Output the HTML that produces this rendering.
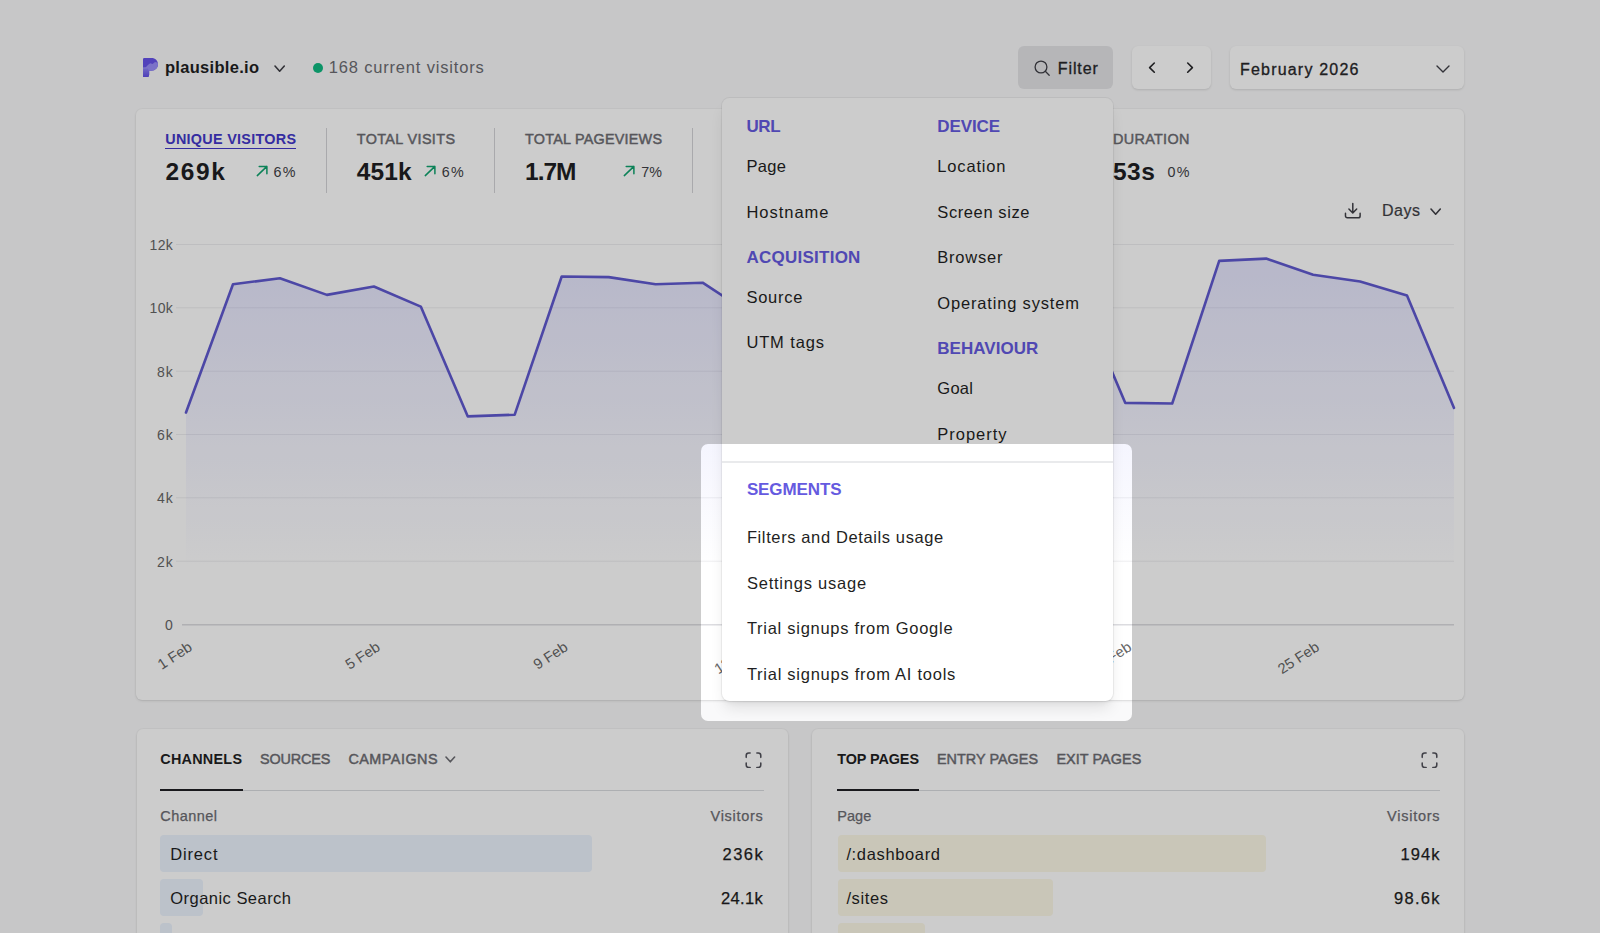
<!DOCTYPE html>
<html lang="en"><head><meta charset="utf-8"><title>Plausible – Segments</title>
<style>
html,body{margin:0;padding:0}
body{width:1600px;height:933px;overflow:hidden;position:relative;background:#f9f9fa;font-family:"Liberation Sans", Arial, sans-serif;}
.abs{position:absolute}
.t{position:absolute;white-space:nowrap;line-height:24px;height:24px}
.card{position:absolute;background:#fff;border-radius:6px;box-shadow:0 0 0 1px rgba(0,0,0,0.02),0 1px 3px rgba(0,0,0,0.09),0 1px 2px -1px rgba(0,0,0,0.09)}
.btn{position:absolute;background:#fff;border-radius:6px;box-shadow:0 1px 3px rgba(0,0,0,0.08),0 1px 2px rgba(0,0,0,0.05)}
.div{position:absolute;width:1px;background:#d4d4d8;top:128px;height:64.5px}
.bar{position:absolute;height:37.2px;border-radius:4px}
#dim{position:absolute;left:700.5px;top:444px;width:431.5px;height:277px;border-radius:7px;box-shadow:0 0 0 3000px rgba(0,0,0,0.2);pointer-events:none}
#dd{position:absolute;left:721.5px;top:98px;width:391px;height:603px;background:#fff;border-radius:7.5px;box-shadow:0 0 0 1px rgba(0,0,0,0.05),0 10px 15px -3px rgba(0,0,0,0.10),0 4px 6px -4px rgba(0,0,0,0.10)}
</style></head>
<body>
<header aria-label="Site header">
<svg class="abs" style="left:142.6px;top:57.5px" width="15" height="19.5" viewBox="0 0 15 19.5"><defs><clipPath id="pc"><path d="M0 1.2 Q0 0 1.2 0 H8.5 C12.3 0 15 2.7 15 6.3 C15 10 12.2 12.7 8.5 12.7 H6.2 V16.5 Q6.2 19.5 3.2 19.5 H0 Z"/></clipPath><linearGradient id="stem" x1="0" y1="0" x2="0" y2="1"><stop offset="0" stop-color="#9388f8"/><stop offset="1" stop-color="#5f4ce6"/></linearGradient></defs><g clip-path="url(#pc)"><rect width="15" height="19.5" fill="#6753ea"/><rect x="0" y="9.4" width="6.4" height="10.2" fill="url(#stem)"/><path d="M0 9.7 L2.8 9.3 L5.2 6.7 L7.2 5.3 L9.6 5.9 L12 3.9 L15 4.8 V13 H6 L4.8 10.6 L0 10.8 Z" fill="#9a8ffa"/></g></svg>
<svg class="abs" style="left:273.7px;top:64.8px" width="11.3" height="7.2" viewBox="-1 -1 11.3 7.2" fill="none" stroke="#3f3f46" stroke-width="1.6" stroke-linecap="round" stroke-linejoin="round"><path d="M0 0 L4.65 5.2 L9.3 0"/></svg>
<div class="abs" style="left:313px;top:62.5px;width:10px;height:10px;border-radius:50%;background:#10b981"></div>
<div class="abs" style="left:1018px;top:45.5px;width:95px;height:43.5px;border-radius:6px;background:#e4e4e7"></div>
<svg class="abs" style="left:1033px;top:59px" width="18" height="18" viewBox="0 0 18 18" fill="none" stroke="#3f3f46" stroke-width="1.3" stroke-linecap="round"><circle cx="8" cy="8" r="5.9"/><path d="M12.3 12.3 L16.2 16.2"/></svg>
<div class="btn" style="left:1132px;top:45.5px;width:78.5px;height:43.5px"></div>
<svg class="abs" style="left:1146px;top:60px" width="12" height="15" viewBox="0 0 12 15" fill="none" stroke="#27272a" stroke-width="1.6" stroke-linecap="round" stroke-linejoin="round"><path d="M8.3 3 L3.6 7.6 L8.3 12.2"/></svg>
<svg class="abs" style="left:1184px;top:60px" width="12" height="15" viewBox="0 0 12 15" fill="none" stroke="#27272a" stroke-width="1.6" stroke-linecap="round" stroke-linejoin="round"><path d="M3.7 3 L8.4 7.6 L3.7 12.2"/></svg>
<div class="btn" style="left:1230.3px;top:45.5px;width:233.7px;height:43.5px"></div>
<svg class="abs" style="left:1435.6px;top:64.8px" width="14" height="8" viewBox="-1 -1 14 8" fill="none" stroke="#3f3f46" stroke-width="1.4" stroke-linecap="round" stroke-linejoin="round"><path d="M0 0 L6.0 6 L12 0"/></svg>

</header>
<main>
<section aria-label="Top stats and visitors graph">
<div class="card" style="left:136px;top:109px;width:1328px;height:591px"></div>
<div class="div" style="left:326px"></div><div class="div" style="left:494px"></div><div class="div" style="left:692px"></div>
<div class="abs" style="left:165.25px;top:147.6px;width:131px;height:1.8px;background:#4338ca"></div>
<svg class="abs" style="left:256px;top:164.8px" width="12" height="12" viewBox="0 0 12 12" fill="none" stroke="#10a36f" stroke-width="1.5" stroke-linecap="round" stroke-linejoin="round"><path d="M1.3 10.6 L10.9 1.4 M3.2 1.4 H10.9 V8.8"/></svg><svg class="abs" style="left:424.2px;top:164.8px" width="12" height="12" viewBox="0 0 12 12" fill="none" stroke="#10a36f" stroke-width="1.5" stroke-linecap="round" stroke-linejoin="round"><path d="M1.3 10.6 L10.9 1.4 M3.2 1.4 H10.9 V8.8"/></svg><svg class="abs" style="left:623px;top:164.8px" width="12" height="12" viewBox="0 0 12 12" fill="none" stroke="#10a36f" stroke-width="1.5" stroke-linecap="round" stroke-linejoin="round"><path d="M1.3 10.6 L10.9 1.4 M3.2 1.4 H10.9 V8.8"/></svg>
<svg class="abs" style="left:1344px;top:201.8px" width="17.6" height="17.6" viewBox="0 0 19 19" fill="none" stroke="#3f3f46" stroke-width="1.6" stroke-linecap="round" stroke-linejoin="round"><path d="M9.5 1.5 V11.5 M5.3 7.6 L9.5 11.8 L13.7 7.6 M1.6 12.2 V15 A2 2 0 0 0 3.6 17 H15.4 A2 2 0 0 0 17.4 15 V12.2"/></svg>
<svg class="abs" style="left:1429.7px;top:207.8px" width="11.3" height="7.2" viewBox="-1 -1 11.3 7.2" fill="none" stroke="#3f3f46" stroke-width="1.6" stroke-linecap="round" stroke-linejoin="round"><path d="M0 0 L4.65 5.2 L9.3 0"/></svg>
<svg class="abs" style="left:0;top:0" width="1600" height="933" viewBox="0 0 1600 933">
<defs><linearGradient id="g" gradientUnits="userSpaceOnUse" x1="0" y1="232" x2="0" y2="568"><stop offset="0" stop-color="#6366f1" stop-opacity="0.18"/><stop offset="1" stop-color="#6366f1" stop-opacity="0"/></linearGradient></defs>
<line x1="176" x2="1454" y1="244.5" y2="244.5" stroke="#eeeef0" stroke-width="1"/><line x1="176" x2="1454" y1="307.8" y2="307.8" stroke="#eeeef0" stroke-width="1"/><line x1="176" x2="1454" y1="371.2" y2="371.2" stroke="#eeeef0" stroke-width="1"/><line x1="176" x2="1454" y1="434.5" y2="434.5" stroke="#eeeef0" stroke-width="1"/><line x1="176" x2="1454" y1="497.8" y2="497.8" stroke="#eeeef0" stroke-width="1"/><line x1="176" x2="1454" y1="561.2" y2="561.2" stroke="#eeeef0" stroke-width="1"/><line x1="182" x2="1454" y1="624.8" y2="624.8" stroke="#dcdce0" stroke-width="1.4"/>
<path d="M186.0,412.5 L233.0,284.3 L279.9,278.2 L326.9,294.9 L373.9,286.5 L420.8,306.6 L467.8,416.4 L514.7,414.7 L561.7,276.5 L608.7,277.1 L655.6,284.3 L702.6,282.7 L749.6,313.5 L796.5,416.7 L843.5,415.7 L890.4,279.7 L937.4,276.7 L984.4,282.7 L1031.3,285.7 L1078.3,292.2 L1125.3,402.9 L1172.2,403.5 L1219.2,260.9 L1266.1,258.6 L1313.1,274.8 L1360.1,281.5 L1407.0,295.4 L1454.0,407.9 L1454.0,624.5 L186.0,624.5 Z" fill="url(#g)"/>
<path d="M186.0,412.5 L233.0,284.3 L279.9,278.2 L326.9,294.9 L373.9,286.5 L420.8,306.6 L467.8,416.4 L514.7,414.7 L561.7,276.5 L608.7,277.1 L655.6,284.3 L702.6,282.7 L749.6,313.5 L796.5,416.7 L843.5,415.7 L890.4,279.7 L937.4,276.7 L984.4,282.7 L1031.3,285.7 L1078.3,292.2 L1125.3,402.9 L1172.2,403.5 L1219.2,260.9 L1266.1,258.6 L1313.1,274.8 L1360.1,281.5 L1407.0,295.4 L1454.0,407.9" fill="none" stroke="#6059d0" stroke-width="2.6" stroke-linejoin="round" stroke-linecap="round"/>
<text x="193.2" y="649.6" transform="rotate(-33 193.2 649.6)" text-anchor="end" font-family="Liberation Sans, Arial, sans-serif" font-size="14.7" fill="#666666">1 Feb</text><text x="381.1" y="649.6" transform="rotate(-33 381.1 649.6)" text-anchor="end" font-family="Liberation Sans, Arial, sans-serif" font-size="14.7" fill="#666666">5 Feb</text><text x="568.9" y="649.6" transform="rotate(-33 568.9 649.6)" text-anchor="end" font-family="Liberation Sans, Arial, sans-serif" font-size="14.7" fill="#666666">9 Feb</text><text x="756.8" y="649.6" transform="rotate(-33 756.8 649.6)" text-anchor="end" font-family="Liberation Sans, Arial, sans-serif" font-size="14.7" fill="#666666">13 Feb</text><text x="944.6" y="649.6" transform="rotate(-33 944.6 649.6)" text-anchor="end" font-family="Liberation Sans, Arial, sans-serif" font-size="14.7" fill="#666666">17 Feb</text><text x="1132.5" y="649.6" transform="rotate(-33 1132.5 649.6)" text-anchor="end" font-family="Liberation Sans, Arial, sans-serif" font-size="14.7" fill="#666666">21 Feb</text><text x="1320.3" y="649.6" transform="rotate(-33 1320.3 649.6)" text-anchor="end" font-family="Liberation Sans, Arial, sans-serif" font-size="14.7" fill="#666666">25 Feb</text>
</svg>

</section>
<section aria-label="Sources and pages">
<div class="card" style="left:136.5px;top:728.5px;width:651.5px;height:260px"></div>
<div class="card" style="left:812px;top:728.5px;width:652px;height:260px"></div>
<svg class="abs" style="left:445.2px;top:756.3px" width="10.6" height="6.8" viewBox="-1 -1 10.6 6.8" fill="none" stroke="#6c6c72" stroke-width="1.6" stroke-linecap="round" stroke-linejoin="round"><path d="M0 0 L4.3 4.8 L8.6 0"/></svg>
<svg class="abs" style="left:744.6px;top:751.9px" width="17" height="16.4" viewBox="0 0 18 18" fill="none" stroke="#52525b" stroke-width="1.7" stroke-linecap="round" stroke-linejoin="round"><path d="M1 5.9 V3.8 A2.8 2.8 0 0 1 3.8 1 H5.3 M12.7 1 H14.2 A2.8 2.8 0 0 1 17 3.8 V5.9 M17 12.1 V14.2 A2.8 2.8 0 0 1 14.2 17 H12.7 M5.3 17 H3.8 A2.8 2.8 0 0 1 1 14.2 V12.1"/></svg><svg class="abs" style="left:1421.0px;top:751.9px" width="17" height="16.4" viewBox="0 0 18 18" fill="none" stroke="#52525b" stroke-width="1.7" stroke-linecap="round" stroke-linejoin="round"><path d="M1 5.9 V3.8 A2.8 2.8 0 0 1 3.8 1 H5.3 M12.7 1 H14.2 A2.8 2.8 0 0 1 17 3.8 V5.9 M17 12.1 V14.2 A2.8 2.8 0 0 1 14.2 17 H12.7 M5.3 17 H3.8 A2.8 2.8 0 0 1 1 14.2 V12.1"/></svg>
<div class="abs" style="left:160.25px;top:789.8px;width:603.5px;height:1px;background:#d9dbdf"></div>
<div class="abs" style="left:160.25px;top:788.8px;width:82.3px;height:2.2px;background:#1f1f23"></div>
<div class="abs" style="left:837.2px;top:789.8px;width:603px;height:1px;background:#d9dbdf"></div>
<div class="abs" style="left:837.2px;top:788.8px;width:82.3px;height:2.2px;background:#1f1f23"></div>
<div class="bar" style="left:160.25px;top:835.3px;width:431.4px;background:#ebf3fd"></div>
<div class="bar" style="left:160.25px;top:879.2px;width:43px;background:#ebf3fd"></div>
<div class="bar" style="left:160.25px;top:923px;width:12px;background:#ebf3fd"></div>
<div class="bar" style="left:838px;top:835.3px;width:427.5px;background:#fcf8e7"></div>
<div class="bar" style="left:838px;top:879.2px;width:215px;background:#fcf8e7"></div>
<div class="bar" style="left:838px;top:923px;width:87px;background:#fcf8e7"></div>
<div class="t" style="left:165.00px;top:54.80px;font-size:16.5px;font-weight:700;color:#1f1f23;letter-spacing:0.293px;">plausible.io</div>
<div class="t" style="left:328.75px;top:54.80px;font-size:16.5px;font-weight:400;color:#6c6c72;letter-spacing:0.822px;">168 current visitors</div>
<div class="t" style="left:1057.80px;top:57.40px;font-size:16px;font-weight:400;color:#27272a;letter-spacing:0.887px;-webkit-text-stroke:0.3px #27272a;">Filter</div>
<div class="t" style="left:1240.00px;top:57.50px;font-size:16px;font-weight:400;color:#27272a;letter-spacing:1.195px;-webkit-text-stroke:0.3px #27272a;">February 2026</div>
<div class="t" style="left:165.25px;top:126.60px;font-size:14.4px;font-weight:700;color:#4338ca;letter-spacing:0.277px;">UNIQUE VISITORS</div>
<div class="t" style="left:165.60px;top:159.50px;font-size:24.5px;font-weight:700;color:#1f1f23;letter-spacing:1.628px;">269k</div>
<div class="t" style="left:273.40px;top:160.00px;font-size:14.3px;font-weight:400;color:#3f3f46;letter-spacing:1.328px;">6%</div>
<div class="t" style="left:356.75px;top:126.60px;font-size:14.4px;font-weight:400;color:#6c6c72;letter-spacing:0.378px;-webkit-text-stroke:0.45px #6c6c72;">TOTAL VISITS</div>
<div class="t" style="left:356.75px;top:159.50px;font-size:24.5px;font-weight:700;color:#1f1f23;letter-spacing:0.161px;">451k</div>
<div class="t" style="left:441.75px;top:160.00px;font-size:14.3px;font-weight:400;color:#3f3f46;letter-spacing:1.328px;">6%</div>
<div class="t" style="left:525.00px;top:126.60px;font-size:14.4px;font-weight:400;color:#6c6c72;letter-spacing:0.228px;-webkit-text-stroke:0.45px #6c6c72;">TOTAL PAGEVIEWS</div>
<div class="t" style="left:525.00px;top:159.50px;font-size:24.5px;font-weight:700;color:#1f1f23;letter-spacing:-1.000px;">1.7M</div>
<div class="t" style="left:641.25px;top:160.00px;font-size:14.3px;font-weight:400;color:#3f3f46;letter-spacing:0.078px;">7%</div>
<div class="t" style="left:1113.10px;top:126.60px;font-size:14.4px;font-weight:400;color:#6c6c72;letter-spacing:0.301px;-webkit-text-stroke:0.45px #6c6c72;">DURATION</div>
<div class="t" style="left:1071.00px;top:126.60px;font-size:14.4px;font-weight:400;color:#6c6c72;letter-spacing:0.004px;-webkit-text-stroke:0.45px #6c6c72;">VISIT</div>
<div class="t" style="left:1112.90px;top:159.50px;font-size:24.5px;font-weight:700;color:#1f1f23;letter-spacing:0.505px;">53s</div>
<div class="t" style="left:1071.00px;top:159.50px;font-size:24.5px;font-weight:700;color:#1f1f23;letter-spacing:-1.000px;">6m</div>
<div class="t" style="left:1167.50px;top:160.00px;font-size:14.3px;font-weight:400;color:#3f3f46;letter-spacing:1.328px;">0%</div>
<div class="t" style="left:1382.00px;top:199.00px;font-size:16px;font-weight:400;color:#3f3f46;letter-spacing:0.516px;-webkit-text-stroke:0.2px #3f3f46;">Days</div>
<div class="t" style="left:149.60px;top:232.90px;font-size:14px;font-weight:400;color:#666666;letter-spacing:0.311px;">12k</div>
<div class="t" style="left:149.60px;top:296.30px;font-size:14px;font-weight:400;color:#666666;letter-spacing:0.311px;">10k</div>
<div class="t" style="left:156.90px;top:359.70px;font-size:14px;font-weight:400;color:#666666;letter-spacing:1.103px;">8k</div>
<div class="t" style="left:156.90px;top:423.00px;font-size:14px;font-weight:400;color:#666666;letter-spacing:1.103px;">6k</div>
<div class="t" style="left:156.90px;top:486.30px;font-size:14px;font-weight:400;color:#666666;letter-spacing:1.103px;">4k</div>
<div class="t" style="left:156.90px;top:549.70px;font-size:14px;font-weight:400;color:#666666;letter-spacing:1.103px;">2k</div>
<div class="t" style="left:164.90px;top:613.00px;font-size:14px;font-weight:400;color:#666666;letter-spacing:-0.197px;">0</div>
<div class="t" style="left:160.25px;top:747.40px;font-size:14.4px;font-weight:700;color:#1f1f23;letter-spacing:0.257px;">CHANNELS</div>
<div class="t" style="left:260.00px;top:747.40px;font-size:14.4px;font-weight:400;color:#6c6c72;letter-spacing:-0.129px;-webkit-text-stroke:0.45px #6c6c72;">SOURCES</div>
<div class="t" style="left:348.40px;top:747.40px;font-size:14.4px;font-weight:400;color:#6c6c72;letter-spacing:0.488px;-webkit-text-stroke:0.45px #6c6c72;">CAMPAIGNS</div>
<div class="t" style="left:160.25px;top:803.50px;font-size:14.5px;font-weight:400;color:#6c6c72;letter-spacing:0.456px;-webkit-text-stroke:0.25px #6c6c72;">Channel</div>
<div class="t" style="left:710.60px;top:803.50px;font-size:14.5px;font-weight:400;color:#6c6c72;letter-spacing:0.688px;-webkit-text-stroke:0.25px #6c6c72;">Visitors</div>
<div class="t" style="left:170.30px;top:842.40px;font-size:16.5px;font-weight:400;color:#1f1f23;letter-spacing:0.821px;">Direct</div>
<div class="t" style="left:722.50px;top:842.40px;font-size:16.5px;font-weight:400;color:#1f1f23;letter-spacing:1.473px;-webkit-text-stroke:0.25px #18181b;">236k</div>
<div class="t" style="left:170.30px;top:886.20px;font-size:16.5px;font-weight:400;color:#1f1f23;letter-spacing:0.466px;">Organic Search</div>
<div class="t" style="left:721.00px;top:886.20px;font-size:16.5px;font-weight:400;color:#1f1f23;letter-spacing:0.331px;-webkit-text-stroke:0.25px #18181b;">24.1k</div>
<div class="t" style="left:837.20px;top:747.40px;font-size:14.4px;font-weight:700;color:#1f1f23;letter-spacing:-0.072px;">TOP PAGES</div>
<div class="t" style="left:937.00px;top:747.40px;font-size:14.4px;font-weight:400;color:#6c6c72;letter-spacing:0.022px;-webkit-text-stroke:0.45px #6c6c72;">ENTRY PAGES</div>
<div class="t" style="left:1056.40px;top:747.40px;font-size:14.4px;font-weight:400;color:#6c6c72;letter-spacing:0.067px;-webkit-text-stroke:0.45px #6c6c72;">EXIT PAGES</div>
<div class="t" style="left:837.20px;top:803.50px;font-size:14.5px;font-weight:400;color:#6c6c72;letter-spacing:0.075px;-webkit-text-stroke:0.25px #6c6c72;">Page</div>
<div class="t" style="left:1387.00px;top:803.50px;font-size:14.5px;font-weight:400;color:#6c6c72;letter-spacing:0.760px;-webkit-text-stroke:0.25px #6c6c72;">Visitors</div>
<div class="t" style="left:846.40px;top:842.40px;font-size:16.5px;font-weight:400;color:#1f1f23;letter-spacing:0.644px;">/:dashboard</div>
<div class="t" style="left:1400.50px;top:842.40px;font-size:16.5px;font-weight:400;color:#1f1f23;letter-spacing:1.106px;-webkit-text-stroke:0.25px #18181b;">194k</div>
<div class="t" style="left:846.40px;top:886.20px;font-size:16.5px;font-weight:400;color:#1f1f23;letter-spacing:0.617px;">/sites</div>
<div class="t" style="left:1394.00px;top:886.20px;font-size:16.5px;font-weight:400;color:#1f1f23;letter-spacing:1.306px;-webkit-text-stroke:0.25px #18181b;">98.6k</div>
</section>
</main>
<nav aria-label="Filter menu">
<div id="dd"></div>
<div class="abs" style="left:721.5px;top:461.4px;width:391px;height:1.2px;background:#e9eaec"></div>
<div class="t" style="left:746.40px;top:115.20px;font-size:17px;font-weight:700;color:#655ae0;letter-spacing:-0.377px;">URL</div>
<div class="t" style="left:746.40px;top:154.20px;font-size:16.5px;font-weight:400;color:#1f1f23;letter-spacing:0.351px;">Page</div>
<div class="t" style="left:746.40px;top:199.70px;font-size:16.5px;font-weight:400;color:#1f1f23;letter-spacing:0.985px;">Hostname</div>
<div class="t" style="left:746.40px;top:245.60px;font-size:17px;font-weight:700;color:#655ae0;letter-spacing:0.255px;">ACQUISITION</div>
<div class="t" style="left:746.40px;top:284.50px;font-size:16.5px;font-weight:400;color:#1f1f23;letter-spacing:0.764px;">Source</div>
<div class="t" style="left:746.40px;top:330.10px;font-size:16.5px;font-weight:400;color:#1f1f23;letter-spacing:0.869px;">UTM tags</div>
<div class="t" style="left:937.30px;top:115.20px;font-size:17px;font-weight:700;color:#655ae0;letter-spacing:-0.119px;">DEVICE</div>
<div class="t" style="left:937.30px;top:154.20px;font-size:16.5px;font-weight:400;color:#1f1f23;letter-spacing:0.830px;">Location</div>
<div class="t" style="left:937.30px;top:199.70px;font-size:16.5px;font-weight:400;color:#1f1f23;letter-spacing:0.598px;">Screen size</div>
<div class="t" style="left:937.30px;top:245.45px;font-size:16.5px;font-weight:400;color:#1f1f23;letter-spacing:0.781px;">Browser</div>
<div class="t" style="left:937.30px;top:291.45px;font-size:16.5px;font-weight:400;color:#1f1f23;letter-spacing:0.826px;">Operating system</div>
<div class="t" style="left:937.30px;top:336.60px;font-size:17px;font-weight:700;color:#655ae0;letter-spacing:0.031px;">BEHAVIOUR</div>
<div class="t" style="left:937.30px;top:376.20px;font-size:16.5px;font-weight:400;color:#1f1f23;letter-spacing:0.280px;">Goal</div>
<div class="t" style="left:937.30px;top:421.70px;font-size:16.5px;font-weight:400;color:#1f1f23;letter-spacing:0.977px;">Property</div>
<div class="t" style="left:746.90px;top:478.20px;font-size:17px;font-weight:700;color:#655ae0;letter-spacing:-0.115px;">SEGMENTS</div>
<div class="t" style="left:746.90px;top:525.00px;font-size:16.5px;font-weight:400;color:#1f1f23;letter-spacing:0.617px;">Filters and Details usage</div>
<div class="t" style="left:746.90px;top:570.60px;font-size:16.5px;font-weight:400;color:#1f1f23;letter-spacing:0.779px;">Settings usage</div>
<div class="t" style="left:746.90px;top:616.20px;font-size:16.5px;font-weight:400;color:#1f1f23;letter-spacing:0.724px;">Trial signups from Google</div>
<div class="t" style="left:746.90px;top:662.10px;font-size:16.5px;font-weight:400;color:#1f1f23;letter-spacing:0.738px;">Trial signups from AI tools</div>
</nav>
<div id="dim"></div>
</body></html>
